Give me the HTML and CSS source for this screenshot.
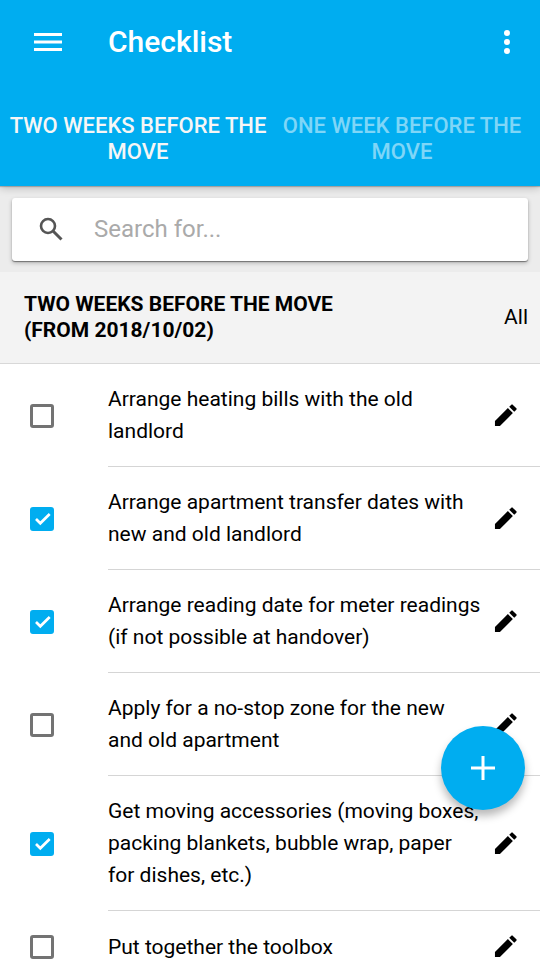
FILE: index.html
```html
<!DOCTYPE html>
<html lang="en">
<head>
<meta charset="utf-8">
<meta name="viewport" content="width=device-width, initial-scale=1">
<title>Checklist</title>
<link rel="stylesheet" href="styles.css">
</head>
<body>
<svg class="defs" aria-hidden="true">
  <symbol id="pencil" viewBox="0 0 24 24">
    <path d="M1 23v-5.200L14.500 4.300l5.200 5.200L6.200 23zM15.900 2.900l2.200-2.200q.7-.7 1.400 0l3.800 3.800q.7.7 0 1.400l-2.200 2.200z"/>
  </symbol>
</svg>
<div class="app">
  <header class="header">
    <div class="toolbar">
      <button class="icon-button" type="button" aria-label="Menu">
        <svg width="28" height="18" viewBox="0 0 28 18"><path d="M0 0h28v3H0zM0 7.500h28v3H0zM0 15h28v3H0z"/></svg>
      </button>
      <h1 class="title">Checklist</h1>
      <button class="icon-button" type="button" aria-label="More options">
        <svg width="6" height="24" viewBox="0 0 6 24"><circle cx="3" cy="3" r="3"/><circle cx="3" cy="12" r="3"/><circle cx="3" cy="21" r="3"/></svg>
      </button>
    </div>
    <nav class="tabs">
      <a class="tab tab-active" href="#two-weeks">TWO WEEKS BEFORE THE MOVE</a>
      <a class="tab" href="#one-week">ONE WEEK BEFORE THE MOVE</a>
    </nav>
  </header>
  <main class="content">
    <div class="search">
      <label class="search-box">
        <svg width="24" height="24" viewBox="0 0 24 24" aria-hidden="true"><circle cx="9" cy="9" r="7" fill="none" stroke="#555" stroke-width="2.600"/><path d="M14 14l8.500 8.500" fill="none" stroke="#555" stroke-width="3"/></svg>
        <input class="search-input" type="search" placeholder="Search for..." aria-label="Search">
      </label>
    </div>
    <div class="section-head" id="two-weeks">
      <h2 class="section-title">TWO WEEKS BEFORE THE MOVE<br>(FROM 2018/10/02)</h2>
      <button class="filter" type="button">All</button>
    </div>
    <ul class="list">
      <li class="item">
        <input class="check" type="checkbox" id="t1">
        <div class="item-body"><label class="item-text" for="t1">Arrange heating bills with the old landlord</label>
        <button class="edit" type="button" aria-label="Edit"><svg width="23" height="23"><use href="#pencil"/></svg></button></div>
      </li>
      <li class="item">
        <input class="check" type="checkbox" id="t2" checked>
        <div class="item-body"><label class="item-text" for="t2">Arrange apartment transfer dates with new and old landlord</label>
        <button class="edit" type="button" aria-label="Edit"><svg width="23" height="23"><use href="#pencil"/></svg></button></div>
      </li>
      <li class="item">
        <input class="check" type="checkbox" id="t3" checked>
        <div class="item-body"><label class="item-text" for="t3">Arrange reading date for meter readings (if not possible at handover)</label>
        <button class="edit" type="button" aria-label="Edit"><svg width="23" height="23"><use href="#pencil"/></svg></button></div>
      </li>
      <li class="item">
        <input class="check" type="checkbox" id="t4">
        <div class="item-body"><label class="item-text" for="t4">Apply for a no-stop zone for the new and old apartment</label>
        <button class="edit" type="button" aria-label="Edit"><svg width="23" height="23"><use href="#pencil"/></svg></button></div>
      </li>
      <li class="item">
        <input class="check" type="checkbox" id="t5" checked>
        <div class="item-body"><label class="item-text" for="t5">Get moving accessories (moving boxes, packing blankets, bubble wrap, paper for dishes, etc.)</label>
        <button class="edit" type="button" aria-label="Edit"><svg width="23" height="23"><use href="#pencil"/></svg></button></div>
      </li>
      <li class="item">
        <input class="check" type="checkbox" id="t6">
        <div class="item-body"><label class="item-text" for="t6">Put together the toolbox</label>
        <button class="edit" type="button" aria-label="Edit"><svg width="23" height="23"><use href="#pencil"/></svg></button></div>
      </li>
    </ul>
  </main>
  <button class="fab" type="button" aria-label="Add item">
    <svg width="24" height="24" viewBox="0 0 24 24"><path d="M10.500 0h3v10.500H24v3H13.500V24h-3V13.500H0v-3h10.500z"/></svg>
  </button>
</div>
</body>
</html>
```

FILE: styles.css
```css
* {
  box-sizing: border-box;
}

body {
  margin: 0;
  font-family: Roboto, "Liberation Sans", sans-serif;
  color: #000;
  background: #fff;
}

button {
  border: 0;
  padding: 0;
  background: none;
  font: inherit;
  color: inherit;
}

svg {
  display: block;
  flex: none;
}

.defs {
  position: absolute;
  width: 0;
  height: 0;
}

.app {
  display: flex;
  flex-direction: column;
  height: 100vh;
  overflow: hidden;
}

.header {
  position: relative;
  z-index: 1;
  flex: none;
  background: #00adf0;
  color: #fff;
  box-shadow: 0 1px 1px rgba(0, 0, 0, 0.2), 0 2px 8px rgba(0, 0, 0, 0.22);
}

.toolbar {
  display: flex;
  align-items: center;
  height: 84px;
  padding: 0 30px 0 34px;
}

.icon-button {
  fill: #fff;
}

.title {
  flex: 1;
  margin: 0 0 0 46px;
  font-size: 30px;
  line-height: 36px;
  font-weight: 500;
}

.tabs {
  display: flex;
  padding: 29px 6px 21px;
}

.tab {
  flex: 1;
  padding: 0 2px;
  font-size: 22px;
  line-height: 26px;
  font-weight: 500;
  text-align: center;
  text-decoration: none;
  color: rgba(255, 255, 255, 0.5);
}

.tab-active {
  color: #f6f6f6;
}

.content {
  flex: 1;
  min-height: 0;
  overflow-y: auto;
  scrollbar-width: none;
}

.search {
  padding: 12px 12px 11px;
  background: #ececec;
}

.search-box {
  display: flex;
  align-items: center;
  gap: 31px;
  height: 63px;
  padding: 0 24px 2px 27px;
  border-radius: 3px;
  background: #fff;
  box-shadow: 0 1px 1px rgba(0, 0, 0, 0.4), 0 2px 4px rgba(0, 0, 0, 0.25);
}

.search-input {
  flex: 1;
  min-width: 0;
  border: 0;
  padding: 0;
  outline: 0;
  background: none;
  font: inherit;
  font-size: 24px;
}

.search-input::placeholder {
  color: #aaa;
}

.section-head {
  display: flex;
  align-items: center;
  justify-content: space-between;
  padding: 19px 12px 20px 24px;
  border-bottom: 1px solid #d8d8d8;
  background: #f3f3f3;
}

.section-title {
  margin: 0;
  font-size: 21px;
  line-height: 26px;
  font-weight: 700;
}

.filter {
  font-size: 21px;
  line-height: 26px;
}

.list {
  margin: 0;
  padding: 0;
  list-style: none;
}

.item {
  display: flex;
  align-items: center;
  padding-left: 30px;
}

.check {
  appearance: none;
  flex: none;
  width: 24px;
  height: 24px;
  margin: 0;
  border: 3px solid #737373;
  border-radius: 3px;
}

.check:checked {
  border-color: #00adf0;
  background: #00adf0 url("data:image/svg+xml,%3Csvg xmlns='http://www.w3.org/2000/svg' viewBox='0 0 18 18'%3E%3Cpath d='M3 9l4.300 4.300L16.700 4' fill='none' stroke='white' stroke-width='2.700'/%3E%3C/svg%3E") center / 18px 18px no-repeat;
}

.item-body {
  display: flex;
  flex: 1;
  align-items: center;
  min-height: 72px;
  margin-left: 54px;
  padding: 19px 23px 19px 0;
  border-bottom: 1px solid #d5d5d5;
}

.item-text {
  flex: 1;
  font-size: 21px;
  line-height: 32px;
}

.edit {
  margin-left: 12px;
}

.fab {
  position: fixed;
  right: 15px;
  bottom: 150px;
  display: flex;
  align-items: center;
  justify-content: center;
  width: 84px;
  height: 84px;
  border-radius: 50%;
  background: #00adf0;
  fill: #fff;
  box-shadow: 0 6px 9px rgba(0, 0, 0, 0.28);
}
```
